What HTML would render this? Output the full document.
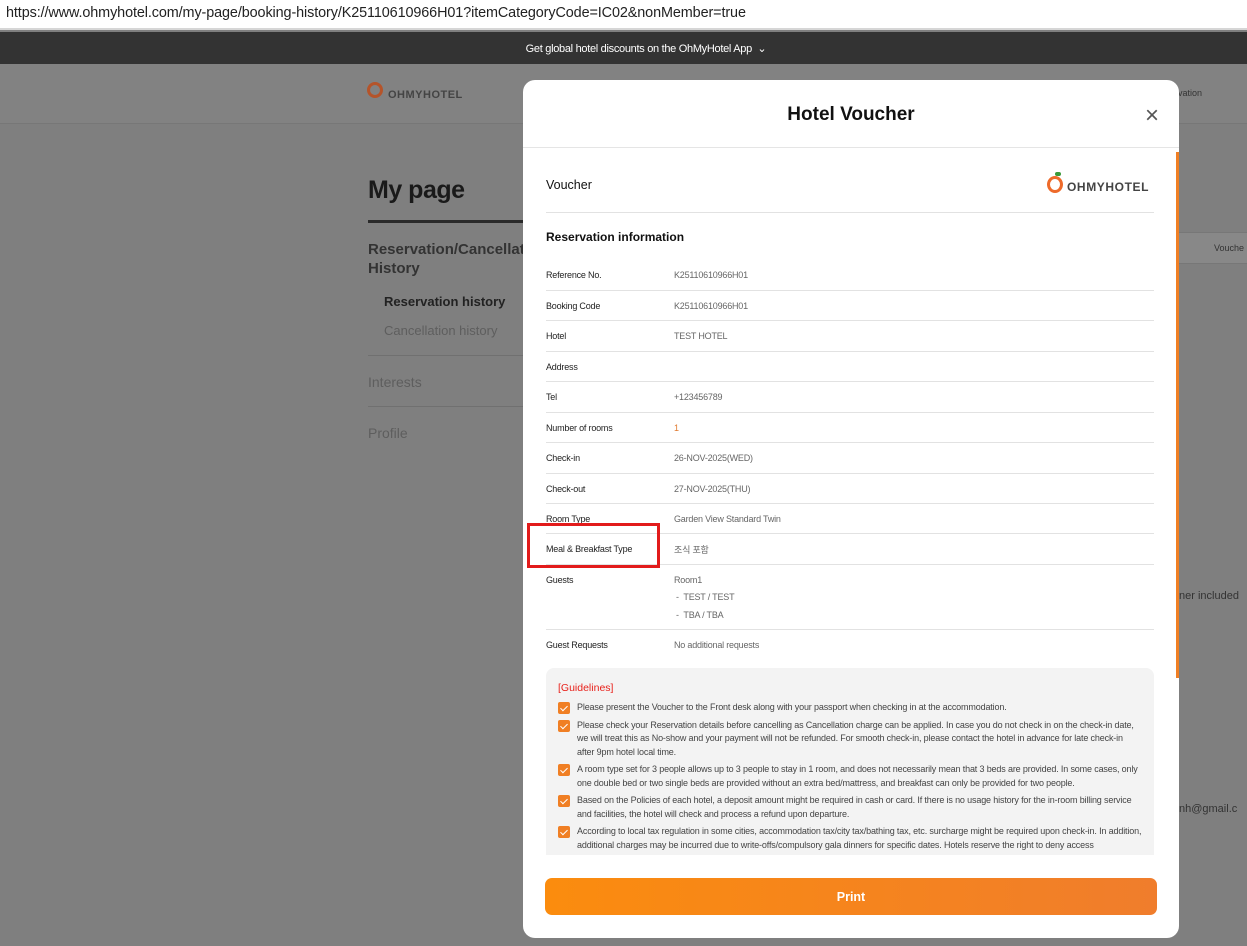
<!DOCTYPE html>
<html><head><meta charset="utf-8"><style>
*{margin:0;padding:0;box-sizing:border-box}
body{width:1247px;height:946px;overflow:hidden;position:relative;font-family:"Liberation Sans","Noto Sans CJK KR",sans-serif;background:#7f7f7f}
.a{position:absolute}
.url{left:0;top:0;width:1247px;height:30px;background:#fff;border-bottom:2px solid #d6d6d6;font-size:14.4px;color:#222;padding:5px 6px;letter-spacing:-0.1px}
.bar{left:0;top:32px;width:1247px;height:32px;background:#333;color:#fff;font-size:11px;text-align:center;padding-top:10px;padding-left:45px;letter-spacing:-0.3px}
.hdr{left:0;top:64px;width:1247px;height:60px;background:#828282;border-bottom:1px solid #777}
.lbl{left:546px;font-size:9px;color:#222;letter-spacing:-0.2px}
.val{left:674px;font-size:9px;color:#666;letter-spacing:-0.2px}
.ln{left:546px;width:608px;height:1px;background:#e2e2e2}
.g{position:relative;padding-left:19px;font-size:9px;line-height:13.5px;color:#444;margin-bottom:4px;letter-spacing:-0.15px}
.g:before{content:"";position:absolute;left:0;top:1px;width:12px;height:12px;background:#f07f24;border-radius:2px}
.g:after{content:"";position:absolute;left:4px;top:3px;width:3px;height:6px;border-right:1.5px solid #fff;border-bottom:1.5px solid #fff;transform:rotate(45deg)}
</style></head><body>
<div class="a url">https://www.ohmyhotel.com/my-page/booking-history/K25110610966H01?itemCategoryCode=IC02&amp;nonMember=true</div>
<div class="a bar">Get global hotel discounts on the OhMyHotel App &nbsp;⌄</div>
<div class="a hdr"></div>
<div class="a" style="left:367px;top:82px;width:16px;height:16px;border:3px solid #b5542a;border-radius:50%"></div>
<div class="a" style="left:388px;top:89px;font-size:11px;font-weight:bold;color:#444;letter-spacing:0.5px">OHMYHOTEL</div>
<div class="a" style="left:1178px;top:88px;font-size:9px;color:#333">vation</div>
<div class="a" style="left:368px;top:176px;font-size:25px;font-weight:bold;color:#1a1a1a;letter-spacing:-0.5px">My page</div>
<div class="a" style="left:368px;top:220px;width:160px;height:3px;background:#2a2a2a"></div>
<div class="a" style="left:368px;top:240px;font-size:15px;font-weight:bold;color:#333;line-height:19px">Reservation/Cancellat<br>History</div>
<div class="a" style="left:384px;top:294px;font-size:13px;font-weight:bold;color:#222">Reservation history</div>
<div class="a" style="left:384px;top:323px;font-size:13px;color:#5e5e5e">Cancellation history</div>
<div class="a" style="left:368px;top:355px;width:160px;height:1px;background:#707070"></div>
<div class="a" style="left:368px;top:374px;font-size:14px;color:#5e5e5e">Interests</div>
<div class="a" style="left:368px;top:406px;width:160px;height:1px;background:#707070"></div>
<div class="a" style="left:368px;top:425px;font-size:14px;color:#5e5e5e">Profile</div>
<div class="a" style="left:1179px;top:232px;width:68px;height:32px;background:#888;border-top:1px solid #777;border-bottom:1px solid #777"></div>
<div class="a" style="left:1214px;top:243px;font-size:9px;color:#333">Vouche</div>
<div class="a" style="left:1179px;top:590px;font-size:11px;color:#333">ner included</div>
<div class="a" style="left:1179px;top:803px;font-size:11px;color:#333">nh@gmail.c</div>

<div class="a" style="left:523px;top:80px;width:656px;height:858px;background:#fff;border-radius:12px;overflow:hidden">
<div class="a" style="left:0;top:0;width:656px;height:68px;border-bottom:1px solid #e5e5e5;text-align:center;padding-top:24px;font-size:19px;font-weight:bold;color:#111">Hotel Voucher</div>
<div class="a" style="left:622px;top:22px;font-size:24px;color:#555;font-weight:300">×</div>
<div class="a" style="left:653px;top:72px;width:3px;height:526px;background:#f07f24"></div>
</div>
<div class="a" style="left:546px;top:178px;font-size:12.5px;color:#111">Voucher</div>
<div class="a" style="left:1047px;top:176px;width:16px;height:17px;border:3px solid #ee6a2a;border-radius:50%"></div>
<div class="a" style="left:1055px;top:172px;width:6px;height:4px;background:#3a9a3a;border-radius:3px"></div>
<div class="a" style="left:1067px;top:180px;font-size:12px;font-weight:bold;color:#444;letter-spacing:0.6px">OHMYHOTEL</div>
<div class="a ln" style="top:212px"></div>
<div class="a" style="left:546px;top:230px;font-size:12px;font-weight:bold;color:#111">Reservation information</div>

<div class="a lbl" style="top:270px">Reference No.</div><div class="a val" style="top:270px">K25110610966H01</div>
<div class="a ln" style="top:290px"></div>
<div class="a lbl" style="top:301px">Booking Code</div><div class="a val" style="top:301px">K25110610966H01</div>
<div class="a ln" style="top:320px"></div>
<div class="a lbl" style="top:331px">Hotel</div><div class="a val" style="top:331px">TEST HOTEL</div>
<div class="a ln" style="top:351px"></div>
<div class="a lbl" style="top:362px">Address</div>
<div class="a ln" style="top:381px"></div>
<div class="a lbl" style="top:392px">Tel</div><div class="a val" style="top:392px">+123456789</div>
<div class="a ln" style="top:412px"></div>
<div class="a lbl" style="top:423px">Number of rooms</div><div class="a val" style="top:423px;color:#e07a30">1</div>
<div class="a ln" style="top:442px"></div>
<div class="a lbl" style="top:453px">Check-in</div><div class="a val" style="top:453px">26-NOV-2025(WED)</div>
<div class="a ln" style="top:473px"></div>
<div class="a lbl" style="top:484px">Check-out</div><div class="a val" style="top:484px">27-NOV-2025(THU)</div>
<div class="a ln" style="top:503px"></div>
<div class="a lbl" style="top:514px">Room Type</div><div class="a val" style="top:514px">Garden View Standard Twin</div>
<div class="a ln" style="top:533px"></div>
<div class="a lbl" style="top:544px">Meal &amp; Breakfast Type</div><div class="a val" style="top:543px">조식 포함</div>
<div class="a ln" style="top:564px"></div>
<div class="a lbl" style="top:575px">Guests</div><div class="a val" style="top:575px">Room1</div>
<div class="a val" style="top:592px;left:676px">-&nbsp;&nbsp;TEST / TEST</div>
<div class="a val" style="top:610px;left:676px">-&nbsp;&nbsp;TBA / TBA</div>
<div class="a ln" style="top:629px"></div>
<div class="a lbl" style="top:640px">Guest Requests</div><div class="a val" style="top:640px">No additional requests</div>
<div class="a" style="left:527px;top:523px;width:133px;height:45px;border:3px solid #e21b1b"></div>

<div class="a" style="left:546px;top:668px;width:608px;height:187px;background:#f3f3f3;border-radius:8px 8px 0 0;overflow:hidden;padding:14px 12px 0 12px">
<div style="font-size:10.5px;color:#e8201a;margin-bottom:7px">[Guidelines]</div>
<div class="g">Please present the Voucher to the Front desk along with your passport when checking in at the accommodation.</div>
<div class="g">Please check your Reservation details before cancelling as Cancellation charge can be applied. In case you do not check in on the check-in date, we will treat this as No-show and your payment will not be refunded. For smooth check-in, please contact the hotel in advance for late check-in after 9pm hotel local time.</div>
<div class="g">A room type set for 3 people allows up to 3 people to stay in 1 room, and does not necessarily mean that 3 beds are provided. In some cases, only one double bed or two single beds are provided without an extra bed/mattress, and breakfast can only be provided for two people.</div>
<div class="g">Based on the Policies of each hotel, a deposit amount might be required in cash or card. If there is no usage history for the in-room billing service and facilities, the hotel will check and process a refund upon departure.</div>
<div class="g">According to local tax regulation in some cities, accommodation tax/city tax/bathing tax, etc. surcharge might be required upon check-in. In addition, additional charges may be incurred due to write-offs/compulsory gala dinners for specific dates. Hotels reserve the right to deny access</div>
</div>
<div class="a" style="left:545px;top:878px;width:612px;height:37px;border-radius:7px;background:linear-gradient(90deg,#fb8c0e,#f07d2c);color:#fff;font-size:12.5px;font-weight:bold;text-align:center;padding-top:12px">Print</div>
</body></html>
